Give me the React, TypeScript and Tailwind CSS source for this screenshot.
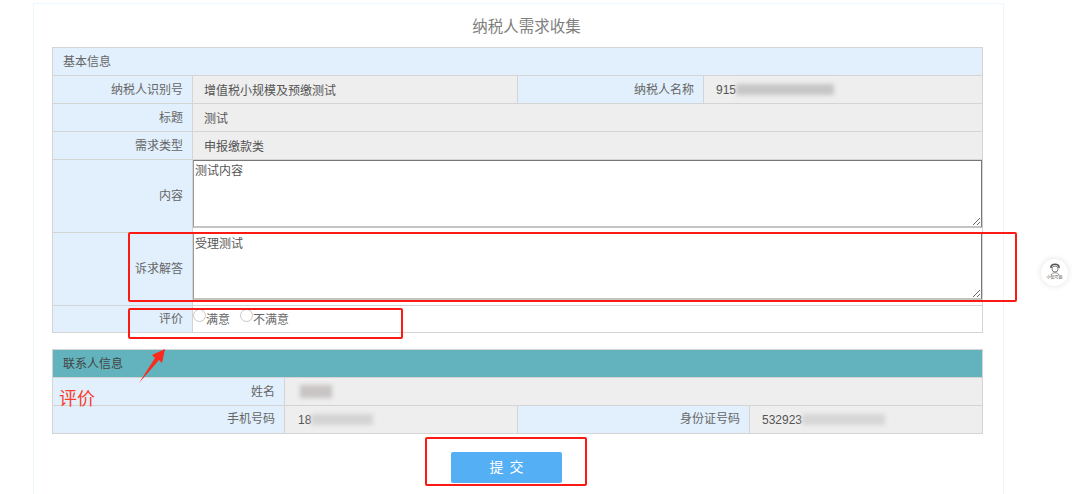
const FONT = "font-['Liberation_Sans','Noto_Sans_CJK_SC',sans-serif]";

function Label({ children, className = "" }: { children?: React.ReactNode; className?: string }) {
  return (
    <div className={`flex items-center justify-end bg-[#e1f0fc] pr-[9px] text-[#666] border-r border-[#d4d4d4] ${className}`}>
      {children}
    </div>
  );
}

function Value({ children, className = "" }: { children?: React.ReactNode; className?: string }) {
  return (
    <div className={`flex items-center bg-[#eeeeee] pl-[11px] text-[#555] border-r border-[#d4d4d4] ${className}`}>
      {children}
    </div>
  );
}

function Masked({ text, width, tone = "bg-[#c6c6c6]" }: { text: string; width: number; tone?: string }) {
  return (
    <div className="flex items-center">
      <span>{text}</span>
      <span className={`h-[11px] blur-[2px] ${tone}`} style={{ width }} />
    </div>
  );
}

function AnswerBox({ text, heightClass }: { text: string; heightClass: string }) {
  return (
    <textarea
      readOnly
      defaultValue={text}
      className={`block w-full ${heightClass} resize-y bg-white px-[1px] py-0 text-[12px] leading-[20px] text-[#555] outline-none border-t border-l border-r border-b-2 border-t-[#777] border-l-[#999] border-r-[#777] border-b-[#c4c4c4]`}
    />
  );
}

function Radio({ label }: { label: string }) {
  return (
    <label className="flex items-start">
      <input type="radio" name="rate" className="-mt-px h-[13px] w-[13px] appearance-none rounded-full border border-[#c8c8c8] bg-white" />
      <span className="leading-[20px]">{label}</span>
    </label>
  );
}

const row4 = "grid grid-cols-[140px_325px_186px_1fr] h-[28px] border-t border-[#d4d4d4]";
const row2 = "grid grid-cols-[140px_1fr] border-t border-[#d4d4d4]";
const contact4 = "grid grid-cols-[232px_233px_232px_1fr] h-[28px] border-t border-[#d4d4d4]";

function RedBox({ className }: { className: string }) {
  return <div className={`absolute rounded-[2px] border-2 border-[#fb1a14] ${className}`} />;
}

export default function App() {
  return (
    <div className={`relative h-[494px] w-[1080px] overflow-hidden bg-white text-[12px] ${FONT}`}>
      <div className="ml-[33px] mt-[3px] h-[520px] w-[971px] border border-[#eef6fd] px-[18px]">
        <h1 className="h-[43px] pl-4 pt-[11px] text-center text-[15.5px] leading-[24px] font-normal text-[#808080]">
          纳税人需求收集
        </h1>

        <div className="w-[931px] border border-[#d4d4d4]">
          <div className="flex h-[27px] items-center bg-[#e1f0fc] pl-[10px] text-[#666]">基本信息</div>
          <div className={row4}>
            <Label>纳税人识别号</Label>
            <Value className="pt-[2px]">增值税小规模及预缴测试</Value>
            <Label>纳税人名称</Label>
            <div className="flex items-center bg-[#eeeeee] pl-[12px] text-[#555]">
              <Masked text="915" width={98} />
            </div>
          </div>
          <div className={`${row2} h-[28px]`}>
            <Label>标题</Label>
            <div className="flex items-center bg-[#eeeeee] pl-[11px] pt-[2px] text-[#555]">测试</div>
          </div>
          <div className={`${row2} h-[28px]`}>
            <Label>需求类型</Label>
            <div className="flex items-center bg-[#eeeeee] pl-[11px] pt-[2px] text-[#555]">申报缴款类</div>
          </div>
          <div className={`${row2} h-[73px]`}>
            <Label>内容</Label>
            <div className="bg-white">
              <AnswerBox text="测试内容" heightClass="h-[68px]" />
            </div>
          </div>
          <div className={`${row2} h-[73px]`}>
            <Label>诉求解答</Label>
            <div className="bg-white">
              <AnswerBox text="受理测试" heightClass="h-[67px]" />
            </div>
          </div>
          <div className={`${row2} h-[27px]`}>
            <Label>评价</Label>
            <div className="flex items-start gap-[10px] bg-white pt-[4px] text-[#666]">
              <Radio label="满意" />
              <Radio label="不满意" />
            </div>
          </div>
        </div>

        <div className="mt-[16px] w-[931px] border border-[#d4d4d4]">
          <div className="flex h-[27px] items-center bg-[#62b3bd] pl-[10px] text-[#444]">联系人信息</div>
          <div className="grid grid-cols-[232px_1fr] h-[28px] border-t border-[#d4d4d4]">
            <Label>姓名</Label>
            <div className="flex items-center bg-[#eeeeee] pl-[15px]">
              <span className="h-[13px] w-[32px] bg-[#c8c4c4] blur-[2px]" />
            </div>
          </div>
          <div className={contact4}>
            <Label className="pb-[2px]">手机号码</Label>
            <Value className="pl-[13px]">
              <Masked text="18" width={62} tone="bg-[#d4d4d4]" />
            </Value>
            <Label className="pb-[2px]">身份证号码</Label>
            <div className="flex items-center bg-[#eeeeee] pl-[12px] text-[#555]">
              <Masked text="532923" width={83} tone="bg-[#d6d6d6]" />
            </div>
          </div>
        </div>

        <div className="mt-[18px] mr-[24px] flex justify-center">
          <button className="h-[31px] w-[111px] rounded-[2px] bg-[#55aff5] pl-[6px] text-[14px] tracking-[6px] text-white">提交</button>
        </div>
      </div>

      {/* annotations drawn over the page */}
      <RedBox className="left-[128px] top-[232px] h-[70px] w-[889px]" />
      <RedBox className="left-[128px] top-[308px] h-[31px] w-[275px]" />
      <RedBox className="left-[425px] top-[437px] h-[49px] w-[162px]" />
      <svg className="absolute left-[136px] top-[348px]" width="32" height="38" viewBox="0 0 32 38">
        <path d="M3 35 L19 10 L16 7 L29 1 L26 15 L23 12 Z" fill="#fb2a1c" />
      </svg>
      <div className="absolute left-[59px] top-[387px] text-[18px] leading-[24px] text-[#f9402c]">评价</div>

      <div className="absolute left-[1041px] top-[259px] flex h-[27px] w-[27px] flex-col items-center rounded-full bg-white pt-[3px] shadow-[0_0_6px_rgba(0,0,0,0.12)]">
        <svg width="12" height="13" viewBox="0 0 12 13" fill="none">
          <path d="M2 6 C1 1 11 1 10 6" stroke="#555" strokeWidth="1.6" />
          <circle cx="6" cy="7" r="3" stroke="#666" strokeWidth="0.8" />
          <path d="M2 13 C3 10 9 10 10 13" stroke="#888" strokeWidth="1" />
        </svg>
        <span className="text-[4px] leading-[5px] text-[#555]">小知号姐</span>
      </div>
    </div>
  );
}
